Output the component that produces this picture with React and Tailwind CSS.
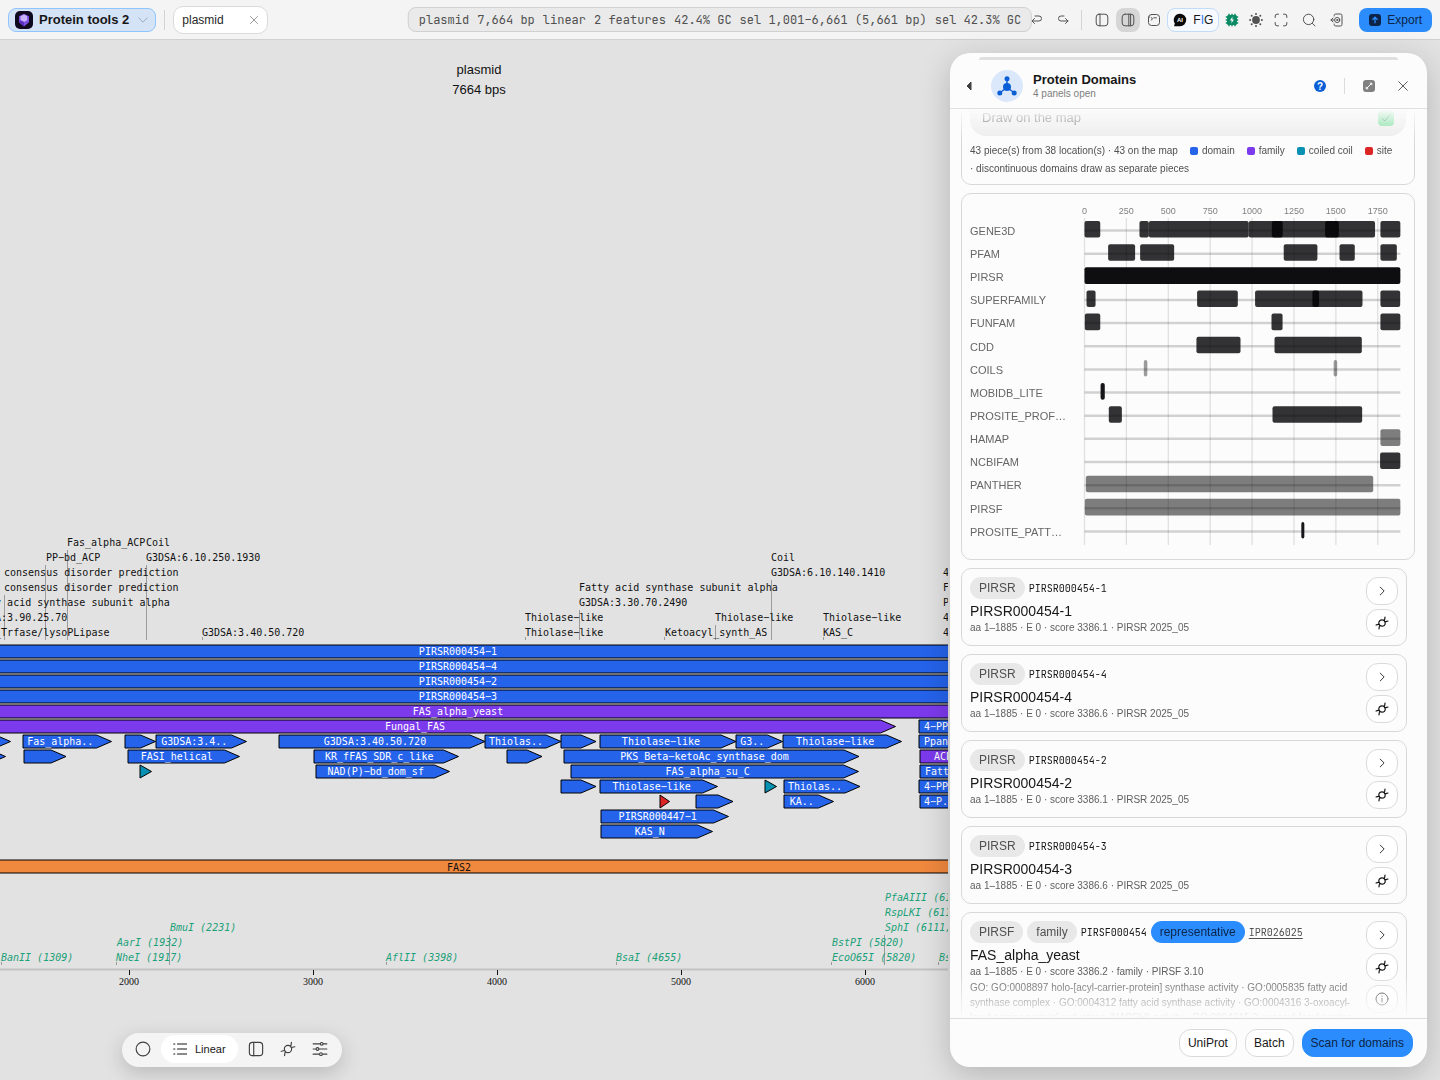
import { useState } from 'react'

const UI = 'font-["Liberation_Sans",Arial,sans-serif]'
const MONO = 'font-["JetBrains_Mono","DejaVu_Sans_Mono",monospace]'

const BLUE = '#2563eb'
const PURPLE = '#7c3aed'
const TEAL = '#0891b2'
const RED = '#dc2626'

const STATUS = ['plasmid', '7,664 bp', 'linear', '2 features', '42.4% GC', 'sel 1,001–6,661 (5,661 bp)', 'sel 42.3% GC']

// Feature arrows: row, start, end, label, colour, label centre
const FEATURES = [
  [5, -600, 895.5, 'Fungal_FAS', PURPLE, 415],
  [6, -60, 10.5],
  [6, 23, 111.5, 'Fas_alpha..'],
  [6, 125, 155.5],
  [6, 156, 246.5, 'G3DSA:3.4..'],
  [6, 279, 485, 'G3DSA:3.40.50.720'],
  [6, 485, 561, 'Thiolas..'],
  [6, 561, 596],
  [6, 600, 736, 'Thiolase−like'],
  [6, 736, 782.5, 'G3..'],
  [6, 783, 901.5, 'Thiolase−like'],
  [7, -60, 5.5],
  [7, 24, 66],
  [7, 128, 239.5, 'FASI_helical'],
  [7, 314, 458.5, 'KR_fFAS_SDR_c_like'],
  [7, 507, 542],
  [7, 564, 859, 'PKS_Beta−ketoAc_synthase_dom'],
  [8, 140, 151.5, '', TEAL],
  [8, 316, 449.5, 'NAD(P)−bd_dom_sf'],
  [8, 571, 858.5, 'FAS_alpha_su_C'],
  [9, 561, 596],
  [9, 600, 717.5, 'Thiolase−like'],
  [9, 765, 776.5, '', TEAL],
  [9, 784, 860, 'Thiolas..'],
  [10, 660, 669.5, '', RED],
  [10, 696, 733],
  [10, 784, 833.5, 'KA..'],
  [11, 601, 728.5, 'PIRSR000447−1'],
  [12, 601, 712.5, 'KAS_N'],
  [5, 919, 1010, '4−PP', BLUE, 936],
  [6, 919, 1010, 'Ppan', BLUE, 936],
  [7, 920, 1010, 'ACP', PURPLE, 943],
  [8, 920, 1010, 'Fatt', BLUE, 937],
  [9, 919, 1010, '4−PP', BLUE, 936],
  [10, 920, 965, '4−P..', BLUE, 939],
]

const FULL_BARS = [
  ['PIRSR000454−1', BLUE],
  ['PIRSR000454−4', BLUE],
  ['PIRSR000454−2', BLUE],
  ['PIRSR000454−3', BLUE],
  ['FAS_alpha_yeast', PURPLE],
]

const TOP_LABELS = [
  [67, 546, 'Fas_alpha_ACP'],
  [146, 546, 'Coil'],
  [46, 561, 'PP−bd_ACP'],
  [146, 561, 'G3DSA:6.10.250.1930'],
  [771, 561, 'Coil'],
  [4, 576, 'consensus disorder prediction'],
  [771, 576, 'G3DSA:6.10.140.1410'],
  [943, 576, '4'],
  [4, 591, 'consensus disorder prediction'],
  [579, 591, 'Fatty acid synthase subunit alpha'],
  [943, 591, 'F'],
  [-29, 606, 'Fatty acid synthase subunit alpha'],
  [579, 606, 'G3DSA:3.30.70.2490'],
  [943, 606, 'P'],
  [-29, 621, 'G3DSA:3.90.25.70'],
  [525, 621, 'Thiolase−like'],
  [715, 621, 'Thiolase−like'],
  [823, 621, 'Thiolase−like'],
  [943, 621, '4'],
  [-29, 636, 'Acyl_Trfase/lysoPLipase'],
  [202, 636, 'G3DSA:3.40.50.720'],
  [525, 636, 'Thiolase−like'],
  [665, 636, 'Ketoacyl_synth_AS'],
  [823, 636, 'KAS_C'],
  [943, 636, '4'],
]

const LEADERS = [
  [4.5, 595, 640], [45.5, 565, 640], [67.5, 550, 640], [146.5, 565, 640], [202.5, 637, 640],
  [525.5, 637, 640], [579.5, 610, 640], [664.5, 637, 640], [715.5, 625, 640], [771.5, 580, 640], [823.5, 637, 640],
  [1.5, 962, 965], [116.5, 962, 965], [169.5, 935, 965], [386.5, 962, 965], [616.5, 962, 965],
  [831.5, 962, 965], [884.5, 935, 965], [938.5, 962, 965],
]

const ENZYMES = [
  [1, 961, 'BanII (1309)'],
  [117, 946, 'AarI (1932)'],
  [116, 961, 'NheI (1917)'],
  [170, 931, 'BmuI (2231)'],
  [386, 961, 'AflII (3398)'],
  [616, 961, 'BsaI (4655)'],
  [832, 946, 'BstPI (5820)'],
  [832, 961, 'EcoO65I (5820)'],
  [885, 901, 'PfaAIII (61'],
  [885, 916, 'RspLKI (611'],
  [885, 931, 'SphI (6111,'],
  [939, 961, 'Bs'],
]

const RULER = [[129, 2000], [313, 3000], [497, 4000], [681, 5000], [865, 6000]]

// Domain hits per database, in residues of the 1885 aa protein
const TRACKS = [
  { name: 'GENE3D', hits: [[0, 94], [328, 384], [384, 980], [980, 1183], [1118, 1518], [1436, 1734], [1766, 1885]] },
  { name: 'PFAM', hits: [[141, 302], [332, 535], [1189, 1390], [1522, 1613], [1766, 1864]] },
  { name: 'PIRSR', alpha: 0.99, hits: [[0, 1885]] },
  { name: 'SUPERFAMILY', hits: [[12, 66], [672, 915], [1018, 1400], [1360, 1659], [1766, 1884]] },
  { name: 'FUNFAM', hits: [[2, 94], [1116, 1182], [1766, 1885]] },
  { name: 'CDD', hits: [[668, 931], [1134, 1655]] },
  { name: 'COILS', alpha: 0.4, hits: [[354, 375], [1487, 1508]] },
  { name: 'MOBIDB_LITE', alpha: 0.95, hits: [[96, 121]] },
  { name: 'PROSITE_PROF…', hits: [[145, 223], [1122, 1657]] },
  { name: 'HAMAP', alpha: 0.53, hits: [[1766, 1885]] },
  { name: 'NCBIFAM', hits: [[1764, 1885]] },
  { name: 'PANTHER', alpha: 0.53, hits: [[8, 1723]] },
  { name: 'PIRSF', alpha: 0.53, hits: [[2, 1885]] },
  { name: 'PROSITE_PATT…', alpha: 0.95, hits: [[1294, 1312]] },
]

const LEGEND = [
  ['domain', 'bg-[#2563eb]'],
  ['family', 'bg-[#7c3aed]'],
  ['coiled coil', 'bg-[#0891b2]'],
  ['site', 'bg-[#dc2626]'],
]

const HITS = [
  { db: 'PIRSR', id: 'PIRSR000454-1', title: 'PIRSR000454-1', meta: 'aa 1–1885 · E 0 · score 3386.1 · PIRSR 2025_05' },
  { db: 'PIRSR', id: 'PIRSR000454-4', title: 'PIRSR000454-4', meta: 'aa 1–1885 · E 0 · score 3386.6 · PIRSR 2025_05' },
  { db: 'PIRSR', id: 'PIRSR000454-2', title: 'PIRSR000454-2', meta: 'aa 1–1885 · E 0 · score 3386.1 · PIRSR 2025_05' },
  { db: 'PIRSR', id: 'PIRSR000454-3', title: 'PIRSR000454-3', meta: 'aa 1–1885 · E 0 · score 3386.6 · PIRSR 2025_05' },
  {
    db: 'PIRSF',
    type: 'family',
    id: 'PIRSF000454',
    representative: true,
    interpro: 'IPR026025',
    title: 'FAS_alpha_yeast',
    meta: 'aa 1–1885 · E 0 · score 3386.2 · family · PIRSF 3.10',
    go: 'GO: GO:0008897 holo-[acyl-carrier-protein] synthase activity · GO:0005835 fatty acid synthase complex · GO:0004312 fatty acid synthase activity · GO:0004316 3-oxoacyl-[acyl-carrier-protein] reductase (NADPH) activity · GO:0004315 3-oxoacyl-[acyl-carrier-',
  },
]

function Icon({ size = 14, children, ...props }) {
  return (
    <svg
      width={size}
      height={size}
      viewBox="0 0 14 14"
      fill="none"
      stroke="currentColor"
      strokeWidth="1"
      strokeLinecap="round"
      strokeLinejoin="round"
      aria-hidden="true"
      {...props}
    >
      {children}
    </svg>
  )
}

const CloseIcon = ({ size }) => <Icon size={size}><path d="M2 2l10 10M12 2L2 12" /></Icon>
const UndoIcon = () => <Icon><path d="M4.5 5.5L2 8l2.5 2.5M2 8h7a2.5 2.5 0 0 0 0-5H5" /></Icon>
const RedoIcon = () => <Icon><path d="M9.5 5.5L12 8l-2.5 2.5M12 8H5a2.5 2.5 0 0 1 0-5h3" /></Icon>
const PanelLeftIcon = ({ size }) => (
  <Icon size={size}><rect x="1.2" y="1.2" width="11.6" height="11.6" rx="2.8" /><path d="M5 1.2v11.6" /></Icon>
)
const PanelRightIcon = () => (
  <Icon><rect x="1.2" y="1.2" width="11.6" height="11.6" rx="2.8" /><path d="M7.8 1.2v11.6M9.6 1.2v11.6" /></Icon>
)
const ConsoleIcon = () => (
  <Icon><rect x="1.5" y="1.5" width="11" height="11" rx="3" /><path d="M1.5 4.2h1M4.2 4.6l1.5 1.2-1.5 1.2M6.8 4.8h2.6" /></Icon>
)
const ExpandIcon = () => (
  <Icon>
    <path d="M1.2 4.5V3a1.8 1.8 0 0 1 1.8-1.8h1.5M9.5 1.2H11A1.8 1.8 0 0 1 12.8 3v1.5M12.8 9.5V11a1.8 1.8 0 0 1-1.8 1.8H9.5M4.5 12.8H3A1.8 1.8 0 0 1 1.2 11V9.5" />
  </Icon>
)
const SearchIcon = () => <Icon><circle cx="6.6" cy="6.4" r="5.2" /><path d="M10.4 10.4l2.6 2.6" /></Icon>
const ExitIcon = () => (
  <Icon>
    <path d="M4.2 3V2.6A1.6 1.6 0 0 1 5.8 1h4.6A1.6 1.6 0 0 1 12 2.6v8.8a1.6 1.6 0 0 1-1.6 1.6H5.8A1.6 1.6 0 0 1 4.2 11.4V11M1 7h3M3 5L1 7l2 2" />
    <circle cx="7.2" cy="7" r="2.6" />
    <circle cx="7.2" cy="7" r="0.6" fill="currentColor" />
  </Icon>
)
const ChipIcon = () => (
  <svg width="14" height="14" viewBox="0 0 14 14" fill="#0b8a63" aria-hidden="true">
    <path d="M4 .8v12.4M7 .8v12.4M10 .8v12.4M.8 4h12.4M.8 7h12.4M.8 10h12.4" stroke="#0b8a63" strokeWidth="1.4" />
    <rect x="2" y="2" width="10" height="10" rx="1.5" />
    <path d="M7.6 3.6L5 7.4h1.8l-.5 3L9 6.6H7.2z" fill="#fff" />
  </svg>
)
const SunIcon = () => (
  <svg width="14" height="14" viewBox="0 0 14 14" fill="currentColor" aria-hidden="true">
    <circle cx="7" cy="7" r="3.9" />
    <circle cx="7" cy="1.1" r="1" /><circle cx="7" cy="12.9" r="1" />
    <circle cx="1.1" cy="7" r="1" /><circle cx="12.9" cy="7" r="1" />
    <circle cx="2.7" cy="2.7" r="1" /><circle cx="11.3" cy="2.7" r="1" />
    <circle cx="2.7" cy="11.3" r="1" /><circle cx="11.3" cy="11.3" r="1" />
  </svg>
)
const CutSiteIcon = ({ size = 14, weight = 1 }) => (
  <Icon size={size} strokeWidth={weight}>
    <circle cx="7" cy="7" r="3.2" />
    <path d="M9.1 4.6c.9-.8.6-2 .9-3.4M9.8 5.6c1.2.4 2.2-.6 3.2-.6M4.9 9.4c-.9.8-.6 2-.9 3.4M4.2 8.4C3 8 2 9 1 9" />
  </Icon>
)
const SlidersIcon = () => (
  <Icon size={16}>
    <path d="M1 2.5h6M10 2.5h3M1 7h2M6.5 7H13M1 11.5h5M9.5 11.5H13" />
    <circle cx="8.5" cy="2.5" r="1.2" /><circle cx="4.8" cy="7" r="1.2" /><circle cx="7.8" cy="11.5" r="1.2" />
  </Icon>
)

function IconButton({ label, active, children }) {
  return (
    <button
      type="button"
      aria-label={label}
      className={`flex size-6 shrink-0 items-center justify-center rounded-lg text-neutral-600 ${active ? 'bg-[#d6d6d6]' : ''}`}
    >
      {children}
    </button>
  )
}

function TopBar() {
  return (
    <header className="relative flex h-10 shrink-0 items-center border-b border-[#d0d0d0] bg-[#f4f4f4] px-2">
      <button type="button" className="flex h-6 items-center gap-1.5 rounded-lg border border-blue-300 bg-[#d4e3f6] px-1.5 text-[13px] font-bold text-neutral-900">
        <svg width="18" height="18" viewBox="0 0 18 18" aria-hidden="true">
          <rect width="18" height="18" rx="5" fill="#100a1e" />
          <path d="M9 2.8l5 2.4v6L9 15.4l-5-4.2v-6z" fill="#7c4fe0" />
          <path d="M9 3.5l3.2 1.8v4L9 11 5.5 9.3v-4z" fill="#c9b2fb" />
          <path d="M9 11v4.4l-5-4.2 1.5-2z" fill="#5b2fc4" />
        </svg>
        <span>Protein tools 2</span>
        <Icon size={12} className="ml-0.5 text-slate-400"><path d="M2 4.5l5 5 5-5" /></Icon>
      </button>
      <span className="mx-2 h-5 w-px bg-[#d4d4d4]" />
      <div className="flex h-7 w-[95px] items-center justify-between rounded-[10px] border border-[#dadada] bg-white px-2 text-[12px] text-neutral-800">
        <span>plasmid</span>
        <button type="button" aria-label="Close tab" className="text-neutral-500"><CloseIcon size={10} /></button>
      </div>

      <div className="ml-auto flex items-center">
        <IconButton label="Undo"><UndoIcon /></IconButton>
        <span className="w-0.5" />
        <IconButton label="Redo"><RedoIcon /></IconButton>
        <span className="mr-2 ml-1.5 h-5 w-px bg-[#d4d4d4]" />
        <div className="flex items-center gap-0.5">
          <IconButton label="Left panel"><PanelLeftIcon /></IconButton>
          <IconButton label="Right panel" active><PanelRightIcon /></IconButton>
          <IconButton label="Console"><ConsoleIcon /></IconButton>
        </div>
        <button type="button" className="ml-px flex h-6 items-center gap-1.5 rounded-lg border border-[#c2dcfb] bg-[#f6f9fd] px-[5px] text-[12px] text-neutral-900">
          <svg width="14" height="14" viewBox="0 0 14 14" aria-hidden="true">
            <path d="M7 .8a6.2 6.2 0 1 1 0 12.4H1l.8-2.8A6.2 6.2 0 0 1 7 .8z" fill="#0a0a0a" />
            <text x="7" y="9.2" textAnchor="middle" fontSize="6" fontWeight="700" fill="#fff">AI</text>
          </svg>
          <span>F<span className="text-blue-500">I</span>G</span>
        </button>
        <span className="w-px" />
        <IconButton label="Engine"><ChipIcon /></IconButton>
        <IconButton label="Theme"><SunIcon /></IconButton>
        <span className="w-px" />
        <IconButton label="Full screen"><ExpandIcon /></IconButton>
        <span className="w-1" />
        <IconButton label="Search"><SearchIcon /></IconButton>
        <span className="w-1" />
        <IconButton label="Exit"><ExitIcon /></IconButton>
        <button type="button" className="ml-2.5 flex h-6 items-center gap-1.5 rounded-lg bg-[#2b8dfd] px-2.5 text-[12px] text-[#0b2447]">
          <svg width="12" height="12" viewBox="0 0 12 12" aria-hidden="true">
            <rect width="12" height="12" rx="3" fill="#0b2447" />
            <path d="M6 9.2V3.4M3.5 5.7L6 3.2l2.5 2.5" stroke="#2b8dfd" strokeWidth="1.3" fill="none" />
          </svg>
          Export
        </button>
      </div>

      <div className={`absolute top-[7px] left-1/2 flex h-[25px] -translate-x-1/2 items-center gap-2 rounded-lg border border-[#d0d0d0] bg-[#eaeaea] px-2.5 text-[12px] whitespace-nowrap text-[#505050] ${MONO}`}>
        {STATUS.map((item) => <span key={item}>{item}</span>)}
      </div>
    </header>
  )
}

function Feature({ row, x1, x2, label, color = BLUE, labelX }) {
  const y = 645 + row * 15
  const neck = Math.max(x1, x2 - 15)
  return (
    <g>
      <path d={`M${x1} ${y}H${neck}L${x2} ${y + 6.5}L${neck} ${y + 13}H${x1}Z`} fill={color} stroke="#000" />
      {label && (
        <text x={labelX ?? (x1 + neck + 1) / 2} y={y + 10} textAnchor="middle" fill="#fff">{label}</text>
      )}
    </g>
  )
}

function LinearMap() {
  return (
    <svg className="block h-full w-full" role="img" aria-label="plasmid linear map">
      <g transform="translate(0 -40)">
        <g className={UI} fontSize="13" fill="#111" textAnchor="middle">
          <text x="479" y="74">plasmid</text>
          <text x="479" y="94">7664 bps</text>
        </g>
        <g stroke="#9b9b9b">
          {LEADERS.map(([x, y1, y2]) => <path key={`${x}-${y1}`} d={`M${x} ${y1}V${y2}`} />)}
        </g>
        <g className='font-["DejaVu_Sans_Mono",monospace]' fontSize="10">
          <g fill="#111">
            {TOP_LABELS.map(([x, y, text]) => <text key={`${x}-${y}`} x={x} y={y}>{text}</text>)}
          </g>
          {FULL_BARS.map(([label, color], row) => (
            <Feature key={label} row={row} x1={-600} x2={1700} label={label} color={color} labelX={458} />
          ))}
          {FEATURES.map(([row, x1, x2, label, color, labelX]) => (
            <Feature key={`${row}-${x1}`} row={row} x1={x1} x2={x2} label={label} color={color} labelX={labelX} />
          ))}
          <path d="M-600 860H1700V873H-600Z" fill="#f0883e" stroke="#000" />
          <text x="459" y="871" textAnchor="middle" fill="#111">FAS2</text>
          <g fill="#1aa179" fontStyle="italic">
            {ENZYMES.map(([x, y, text]) => <text key={text} x={x} y={y}>{text}</text>)}
          </g>
        </g>
        <path d="M0 969.5H2000" stroke="#c2c2c2" strokeWidth="2" />
        <g className='font-["Liberation_Serif",serif]' fontSize="10" fill="#111" textAnchor="middle">
          {RULER.map(([x, value]) => (
            <g key={value}>
              <path d={`M${x + 0.5} 970v5`} stroke="#111" />
              <text x={x} y="985">{value}</text>
            </g>
          ))}
        </g>
      </g>
    </svg>
  )
}

function ViewToolbar() {
  const item = 'flex h-7 w-8 items-center justify-center rounded-full text-neutral-700'
  return (
    <div className="absolute bottom-[13px] left-[122px] flex h-[34px] items-start rounded-full bg-[#f4f4f4] pt-0.5 pr-1.5 pl-[5px] shadow-[0_6px_20px_rgba(0,0,0,0.18)]">
      <button type="button" aria-label="Circular" className={item}>
        <Icon size={16}><circle cx="7" cy="7" r="6" /></Icon>
      </button>
      <button type="button" className="mx-0.5 flex h-7 items-center gap-2 rounded-full bg-white px-3 text-[11px] text-neutral-900">
        <Icon size={14} strokeWidth="1.2">
          <path d="M4.5 2h9M4.5 7h9M4.5 12h9M.8 2h1M.8 7h1M.8 12h1" />
        </Icon>
        Linear
      </button>
      <button type="button" aria-label="Sequence" className={item}><PanelLeftIcon size={16} /></button>
      <button type="button" aria-label="Cut sites" className={item}><CutSiteIcon size={16} /></button>
      <button type="button" aria-label="Settings" className={item}><SlidersIcon /></button>
    </div>
  )
}

function DomainChart() {
  const toX = (aa) => 114.5 + aa * 0.16756
  return (
    <section className="rounded-[10px] border border-[#d8d8d8] p-2">
      <svg viewBox="0 0 436 349" className="block w-full" role="img" aria-label="Domain hits by database">
        <g fontSize="9" fill="#808080" textAnchor="middle">
          {[0, 250, 500, 750, 1000, 1250, 1500, 1750].map((aa) => (
            <g key={aa}>
              <path d={`M${toX(aa)} 16V343`} stroke="#e0e0e0" strokeWidth="1.3" />
              <text x={toX(aa)} y="12">{aa}</text>
            </g>
          ))}
        </g>
        {TRACKS.map(({ name, hits, alpha = 0.8 }, i) => {
          const y = 19 + i * 23.15
          return (
            <g key={name}>
              <text x="0" y={Math.floor(y + 14.3)} fontSize="11" fill="#666">{name}</text>
              <path d={`M${toX(0)} ${y + 9.5}H${toX(1885)}`} stroke="#000" strokeOpacity="0.17" strokeWidth="2.5" />
              {hits.map(([from, to]) => (
                <rect
                  key={from}
                  x={toX(from)}
                  y={y}
                  width={toX(to) - toX(from)}
                  height="16.6"
                  rx="2"
                  fill={alpha === 0.8 ? '#000002' : '#0b0b0d'}
                  fillOpacity={alpha}
                />
              ))}
            </g>
          )
        })}
      </svg>
    </section>
  )
}

function RoundButton({ label, children }) {
  return (
    <button type="button" aria-label={label} className="flex h-7 w-8 items-center justify-center rounded-xl border border-[#dadada] bg-white text-neutral-900">
      {children}
    </button>
  )
}

function HitCard({ hit }) {
  const badge = 'flex h-[22px] items-center rounded-full px-[9px] text-[12px]'
  return (
    <article className="flex gap-3 rounded-[10px] border border-[#d8d8d8] p-2">
      <div className="min-w-0 flex-1">
        <div className="flex items-center gap-1">
          <span className={`${badge} bg-[#e8e8e8] text-[#505050]`}>{hit.db}</span>
          {hit.type && <span className={`${badge} bg-[#e8e8e8] text-[#505050]`}>{hit.type}</span>}
          <span className={`text-[10px] text-neutral-900 ${MONO}`}>{hit.id}</span>
          {hit.representative && <span className={`${badge} bg-[#2b8dfd] text-[#0b2447]`}>representative</span>}
          {hit.interpro && (
            <a href="#interpro" className={`text-[10px] text-[#505050] underline underline-offset-2 ${MONO}`}>{hit.interpro}</a>
          )}
        </div>
        <h3 className="mt-[3px] text-[14px] leading-[18px] text-neutral-900">{hit.title}</h3>
        <p className="text-[10px] leading-[16px] text-[#606060]">{hit.meta}</p>
        {hit.go && <p className="text-[10px] leading-[15px] text-[#606060]">{hit.go}</p>}
      </div>
      <div className="flex flex-col gap-1">
        <RoundButton label="Open"><Icon size={12}><path d="M5 2.5L9.5 7 5 11.5" /></Icon></RoundButton>
        <RoundButton label="Show on map"><CutSiteIcon size={14} weight={1.2} /></RoundButton>
        {hit.go && (
          <RoundButton label="Details">
            <Icon><circle cx="7" cy="7" r="6" /><path d="M7 6.4V10M7 4v.3" /></Icon>
          </RoundButton>
        )}
      </div>
    </article>
  )
}

function DomainPanel() {
  const [drawOnMap, setDrawOnMap] = useState(true)
  const action = 'h-7 rounded-xl border px-2 text-[12px]'
  return (
    <aside className="my-[13px] mr-[13px] flex w-[477px] shrink-0 flex-col overflow-hidden rounded-[20px] bg-[#fcfcfc] shadow-[0_8px_32px_rgba(0,0,0,0.2)]">
      <header className="flex h-14 shrink-0 flex-col border-b border-[#e0e0e0]">
        <div className="mx-[29px] mt-1 h-[3px] shrink-0 rounded-t-full bg-[#e0e0e0]" />
        <div className="flex flex-1 items-center pt-2.5 pr-3 pb-1.5 pl-[11px]">
          <button type="button" aria-label="Back" className="flex w-4 justify-center text-neutral-700">
            <svg width="6" height="10" viewBox="0 0 6 10" aria-hidden="true"><path d="M5 1v8L1 5z" fill="currentColor" stroke="currentColor" strokeLinejoin="round" /></svg>
          </button>
          <span className="ml-3.5 flex size-8 items-center justify-center rounded-full bg-[#dbe8fb]">
            <svg width="20" height="20" viewBox="0 0 20 20" fill="#0a5fd6" aria-hidden="true">
              <path d="M10 2v9M10 11.5L2.5 17M10 11.5l7.5 5.5" stroke="#0a5fd6" strokeWidth="1.5" />
              <circle cx="10" cy="11" r="4" />
              <circle cx="10" cy="2.7" r="2.5" /><circle cx="2.8" cy="17" r="2.5" /><circle cx="17.2" cy="17" r="2.5" />
            </svg>
          </span>
          <div className="ml-2.5 flex-1">
            <h2 className="text-[13px] leading-[15px] font-bold text-neutral-900">Protein Domains</h2>
            <p className="text-[10px] leading-[13px] text-[#808080]">4 panels open</p>
          </div>
          <button type="button" aria-label="Help" className="flex size-6 items-center justify-center">
            <svg width="12" height="12" viewBox="0 0 12 12" aria-hidden="true">
              <circle cx="6" cy="6" r="6" fill="#0a5fd6" />
              <text x="6" y="9.5" textAnchor="middle" fontSize="10" fontWeight="700" fill="#fff">?</text>
            </svg>
          </button>
          <span className="mx-3 h-4 w-px bg-[#dcdcdc]" />
          <button type="button" aria-label="Expand" className="flex size-6 items-center justify-center">
            <svg width="12" height="12" viewBox="0 0 12 12" aria-hidden="true">
              <rect width="12" height="12" rx="3" fill="#808080" />
              <path d="M3.5 8.5l5-5M6.8 3.2h2v2M3.2 6.8v2h2" stroke="#fff" fill="none" />
            </svg>
          </button>
          <button type="button" aria-label="Close panel" className="ml-2.5 flex size-6 items-center justify-center text-neutral-700"><CloseIcon size={12} /></button>
        </div>
      </header>

      <div className="min-h-0 flex-1 overflow-hidden pr-3 pl-[11px] [mask-image:linear-gradient(to_bottom,transparent,black_30px,black_calc(100%-42px),transparent)]">
        <section className="-mt-[18px] rounded-[10px] border border-[#d8d8d8] p-2 text-[10px] leading-[14px] text-[#505050]">
          <label className="flex h-9 items-center justify-between rounded-2xl bg-[#ececec] px-3 text-[13px] text-[#505050]">
            Draw on the map
            <input type="checkbox" className="peer sr-only" checked={drawOnMap} onChange={(e) => setDrawOnMap(e.target.checked)} />
            <span className="flex size-4 items-center justify-center rounded bg-transparent text-emerald-900 peer-checked:bg-[#6fdc94]">
              <Icon size={12}><path d="M2.5 7.5l3 3 6-7" /></Icon>
            </span>
          </label>
          <div className="mt-2 flex flex-wrap items-center gap-x-3 gap-y-1">
            <span>43 piece(s) from 38 location(s) · 43 on the map</span>
            {LEGEND.map(([name, color]) => (
              <span key={name} className="flex items-center gap-1">
                <span className={`size-2 rounded-xs ${color}`} />
                {name}
              </span>
            ))}
            <span>· discontinuous domains draw as separate pieces</span>
          </div>
        </section>
        <div className="mt-2"><DomainChart /></div>
        <div className="mt-2 flex flex-col gap-2 pr-2">
          {HITS.map((hit) => <HitCard key={hit.id} hit={hit} />)}
        </div>
      </div>

      <footer className="flex shrink-0 items-center justify-end gap-2 border-t border-[#dcdcdc] pt-2.5 pr-3.5 pb-2.5">
        <button type="button" className={`${action} border-[#dadada] bg-white text-neutral-900`}>UniProt</button>
        <button type="button" className={`${action} border-[#dadada] bg-white text-neutral-900`}>Batch</button>
        <button type="button" className={`${action} border-[#2b8dfd] bg-[#2b8dfd] text-[#0b2447]`}>Scan for domains</button>
      </footer>
    </aside>
  )
}

export default function App() {
  return (
    <div className={`flex h-screen flex-col overflow-hidden bg-[#e2e2e2] ${UI}`}>
      <TopBar />
      <main className="relative flex min-h-0 flex-1 gap-0.5">
        <div className="min-w-0 flex-1 overflow-hidden">
          <LinearMap />
        </div>
        <DomainPanel />
        <ViewToolbar />
      </main>
    </div>
  )
}
